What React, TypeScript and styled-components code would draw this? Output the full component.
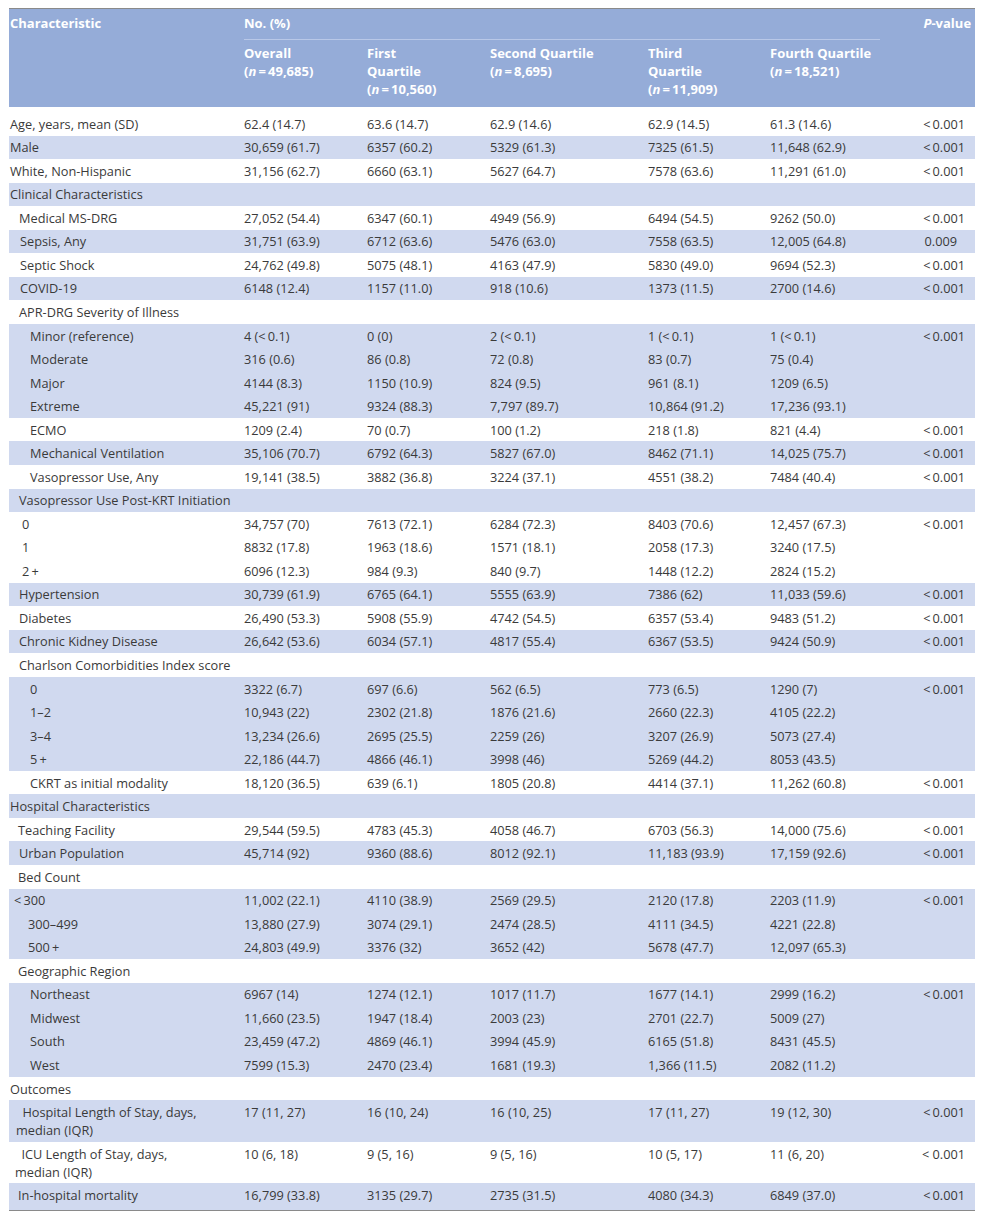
import React from "react";
import styled, { createGlobalStyle } from "styled-components";

const GlobalStyle = createGlobalStyle`
  html, body {
    margin: 0;
    padding: 0;
    background: #ffffff;
  }
  body {
    font-family: "Open Sans", "Noto Sans", sans-serif;
  }
`;

const Page = styled.div`
  padding: 8px 0 0 9px;
`;

const Table = styled.table`
  width: 966px;
  table-layout: fixed;
  border-collapse: collapse;
  border-top: 1px solid #8a8a8a;
  border-bottom: 1px solid #8a8a8a;
  color: #3a3a3a;
  font-size: 12.75px;
  line-height: 18px;
`;

const Head = styled.thead`
  background: #95acd8;
  color: #ffffff;
  font-size: 13px;
  font-weight: 700;
`;

const Th = styled.th<{ $right?: boolean; $rule?: boolean }>`
  text-align: ${({ $right }) => ($right ? "right" : "left")};
  vertical-align: top;
  padding: 5px ${({ $right }) => ($right ? "4px" : "0")} 7px 0;
  font-weight: 700;
  ${({ $rule }) => $rule && "border-bottom: 1px solid #b9c8e8;"}
`;

const SubTh = styled(Th)`
  padding: 4px 0 9px 0;
`;

const FirstTh = styled(Th)`
  padding-left: 1px;
`;

const Spacer = styled.tr`
  height: 5px;
`;

const Row = styled.tr<{ $shaded?: boolean }>`
  background: ${({ $shaded }) => ($shaded ? "#d0d9ef" : "#ffffff")};
`;

const Label = styled.td<{ $indent: number }>`
  padding: 2.78px 0 2.78px ${({ $indent }) => $indent}px;
  vertical-align: top;
  white-space: nowrap;
`;

const Cell = styled.td`
  padding: 2.78px 0;
  vertical-align: top;
  white-space: nowrap;
`;

const PCell = styled.td<{ $pad?: number }>`
  padding: 2.78px ${({ $pad }) => $pad ?? 10}px 2.78px 0;
  text-align: right;
  vertical-align: top;
  white-space: nowrap;
`;

const LastRow = styled(Row)`
  td {
    padding-bottom: 6px;
  }
`;

const N = ({ v }: { v: string }) => (
  <>
    (<i>n</i>
    {"\u2009=\u2009"}
    {v})
  </>
);

type Line = {
  label: React.ReactNode;
  indent: number;
  shaded?: boolean;
  vals?: string[];
  p?: string;
  pPad?: number;
};

const LT = "<\u20090.001";

const rows: Line[] = [
  { label: "Age, years, mean (SD)", indent: 1, vals: ["62.4 (14.7)", "63.6 (14.7)", "62.9 (14.6)", "62.9 (14.5)", "61.3 (14.6)"], p: LT },
  { label: "Male", indent: 1, shaded: true, vals: ["30,659 (61.7)", "6357 (60.2)", "5329 (61.3)", "7325 (61.5)", "11,648 (62.9)"], p: LT },
  { label: "White, Non-Hispanic", indent: 1, vals: ["31,156 (62.7)", "6660 (63.1)", "5627 (64.7)", "7578 (63.6)", "11,291 (61.0)"], p: LT },
  { label: "Clinical Characteristics", indent: 1, shaded: true },
  { label: "Medical MS-DRG", indent: 10, vals: ["27,052 (54.4)", "6347 (60.1)", "4949 (56.9)", "6494 (54.5)", "9262 (50.0)"], p: LT },
  { label: "Sepsis, Any", indent: 11, shaded: true, vals: ["31,751 (63.9)", "6712 (63.6)", "5476 (63.0)", "7558 (63.5)", "12,005 (64.8)"], p: "0.009", pPad: 18 },
  { label: "Septic Shock", indent: 11, vals: ["24,762 (49.8)", "5075 (48.1)", "4163 (47.9)", "5830 (49.0)", "9694 (52.3)"], p: LT },
  { label: "COVID-19", indent: 11, shaded: true, vals: ["6148 (12.4)", "1157 (11.0)", "918 (10.6)", "1373 (11.5)", "2700 (14.6)"], p: LT },
  { label: "APR-DRG Severity of Illness", indent: 10 },
  { label: "Minor (reference)", indent: 21, shaded: true, vals: ["4 (<\u20090.1)", "0 (0)", "2 (<\u20090.1)", "1 (<\u20090.1)", "1 (<\u20090.1)"], p: LT },
  { label: "Moderate", indent: 21, shaded: true, vals: ["316 (0.6)", "86 (0.8)", "72 (0.8)", "83 (0.7)", "75 (0.4)"] },
  { label: "Major", indent: 21, shaded: true, vals: ["4144 (8.3)", "1150 (10.9)", "824 (9.5)", "961 (8.1)", "1209 (6.5)"] },
  { label: "Extreme", indent: 21, shaded: true, vals: ["45,221 (91)", "9324 (88.3)", "7,797 (89.7)", "10,864 (91.2)", "17,236 (93.1)"] },
  { label: "ECMO", indent: 21, vals: ["1209 (2.4)", "70 (0.7)", "100 (1.2)", "218 (1.8)", "821 (4.4)"], p: LT },
  { label: "Mechanical Ventilation", indent: 21, shaded: true, vals: ["35,106 (70.7)", "6792 (64.3)", "5827 (67.0)", "8462 (71.1)", "14,025 (75.7)"], p: LT },
  { label: "Vasopressor Use, Any", indent: 21, vals: ["19,141 (38.5)", "3882 (36.8)", "3224 (37.1)", "4551 (38.2)", "7484 (40.4)"], p: LT },
  { label: "Vasopressor Use Post-KRT Initiation", indent: 10, shaded: true },
  { label: "0", indent: 13, vals: ["34,757 (70)", "7613 (72.1)", "6284 (72.3)", "8403 (70.6)", "12,457 (67.3)"], p: LT },
  { label: "1", indent: 13, vals: ["8832 (17.8)", "1963 (18.6)", "1571 (18.1)", "2058 (17.3)", "3240 (17.5)"] },
  { label: "2\u2009+", indent: 13, vals: ["6096 (12.3)", "984 (9.3)", "840 (9.7)", "1448 (12.2)", "2824 (15.2)"] },
  { label: "Hypertension", indent: 10, shaded: true, vals: ["30,739 (61.9)", "6765 (64.1)", "5555 (63.9)", "7386 (62)", "11,033 (59.6)"], p: LT },
  { label: "Diabetes", indent: 10, vals: ["26,490 (53.3)", "5908 (55.9)", "4742 (54.5)", "6357 (53.4)", "9483 (51.2)"], p: LT },
  { label: "Chronic Kidney Disease", indent: 10, shaded: true, vals: ["26,642 (53.6)", "6034 (57.1)", "4817 (55.4)", "6367 (53.5)", "9424 (50.9)"], p: LT },
  { label: "Charlson Comorbidities Index score", indent: 10 },
  { label: "0", indent: 21, shaded: true, vals: ["3322 (6.7)", "697 (6.6)", "562 (6.5)", "773 (6.5)", "1290 (7)"], p: LT },
  { label: "1\u20132", indent: 21, shaded: true, vals: ["10,943 (22)", "2302 (21.8)", "1876 (21.6)", "2660 (22.3)", "4105 (22.2)"] },
  { label: "3\u20134", indent: 21, shaded: true, vals: ["13,234 (26.6)", "2695 (25.5)", "2259 (26)", "3207 (26.9)", "5073 (27.4)"] },
  { label: "5\u2009+", indent: 21, shaded: true, vals: ["22,186 (44.7)", "4866 (46.1)", "3998 (46)", "5269 (44.2)", "8053 (43.5)"] },
  { label: "CKRT as initial modality", indent: 21, vals: ["18,120 (36.5)", "639 (6.1)", "1805 (20.8)", "4414 (37.1)", "11,262 (60.8)"], p: LT },
  { label: "Hospital Characteristics", indent: 1, shaded: true },
  { label: "Teaching Facility", indent: 9, vals: ["29,544 (59.5)", "4783 (45.3)", "4058 (46.7)", "6703 (56.3)", "14,000 (75.6)"], p: LT },
  { label: "Urban Population", indent: 10, shaded: true, vals: ["45,714 (92)", "9360 (88.6)", "8012 (92.1)", "11,183 (93.9)", "17,159 (92.6)"], p: LT },
  { label: "Bed Count", indent: 9 },
  { label: "<\u2009300", indent: 5, shaded: true, vals: ["11,002 (22.1)", "4110 (38.9)", "2569 (29.5)", "2120 (17.8)", "2203 (11.9)"], p: LT },
  { label: "300\u2013499", indent: 19, shaded: true, vals: ["13,880 (27.9)", "3074 (29.1)", "2474 (28.5)", "4111 (34.5)", "4221 (22.8)"] },
  { label: "500\u2009+", indent: 19, shaded: true, vals: ["24,803 (49.9)", "3376 (32)", "3652 (42)", "5678 (47.7)", "12,097 (65.3)"] },
  { label: "Geographic Region", indent: 9 },
  { label: "Northeast", indent: 21, shaded: true, vals: ["6967 (14)", "1274 (12.1)", "1017 (11.7)", "1677 (14.1)", "2999 (16.2)"], p: LT },
  { label: "Midwest", indent: 21, shaded: true, vals: ["11,660 (23.5)", "1947 (18.4)", "2003 (23)", "2701 (22.7)", "5009 (27)"] },
  { label: "South", indent: 21, shaded: true, vals: ["23,459 (47.2)", "4869 (46.1)", "3994 (45.9)", "6165 (51.8)", "8431 (45.5)"] },
  { label: "West", indent: 21, shaded: true, vals: ["7599 (15.3)", "2470 (23.4)", "1681 (19.3)", "1,366 (11.5)", "2082 (11.2)"] },
  { label: "Outcomes", indent: 1 },
  {
    label: (
      <>
        {"\u2002Hospital Length of Stay, days,"}
        <br />
        median (IQR)
      </>
    ),
    indent: 7,
    shaded: true,
    vals: ["17 (11, 27)", "16 (10, 24)", "16 (10, 25)", "17 (11, 27)", "19 (12, 30)"],
    p: LT,
  },
  {
    label: (
      <>
        {"\u2002ICU Length of Stay, days,"}
        <br />
        median (IQR)
      </>
    ),
    indent: 6,
    vals: ["10 (6, 18)", "9 (5, 16)", "9 (5, 16)", "10 (5, 17)", "11 (6, 20)"],
    p: "<\u20050.001",
  },
  { label: "In-hospital mortality", indent: 9, shaded: true, vals: ["16,799 (33.8)", "3135 (29.7)", "2735 (31.5)", "4080 (34.3)", "6849 (37.0)"], p: LT },
];

export default function App() {
  return (
    <Page>
      <GlobalStyle />
      <Table>
        <colgroup>
          <col style={{ width: 235 }} />
          <col style={{ width: 123 }} />
          <col style={{ width: 123 }} />
          <col style={{ width: 158 }} />
          <col style={{ width: 122 }} />
          <col style={{ width: 110 }} />
          <col style={{ width: 95 }} />
        </colgroup>
        <Head>
          <tr>
            <FirstTh rowSpan={2}>Characteristic</FirstTh>
            <Th colSpan={5} $rule>
              No. (%)
            </Th>
            <Th rowSpan={2} $right>
              <i>P</i>-value
            </Th>
          </tr>
          <tr>
            <SubTh>
              Overall
              <br />
              <N v="49,685" />
            </SubTh>
            <SubTh>
              First
              <br />
              Quartile
              <br />
              <N v="10,560" />
            </SubTh>
            <SubTh>
              Second Quartile
              <br />
              <N v="8,695" />
            </SubTh>
            <SubTh>
              Third
              <br />
              Quartile
              <br />
              <N v="11,909" />
            </SubTh>
            <SubTh>
              Fourth Quartile
              <br />
              <N v="18,521" />
            </SubTh>
          </tr>
        </Head>
        <tbody>
          <Spacer />
          {rows.map((r, i) => {
            const R = i === rows.length - 1 ? LastRow : Row;
            return (
              <R key={i} $shaded={r.shaded}>
                <Label $indent={r.indent}>{r.label}</Label>
                {[0, 1, 2, 3, 4].map((k) => (
                  <Cell key={k}>{r.vals ? r.vals[k] : ""}</Cell>
                ))}
                <PCell $pad={r.pPad}>{r.p ?? ""}</PCell>
              </R>
            );
          })}
        </tbody>
      </Table>
    </Page>
  );
}
